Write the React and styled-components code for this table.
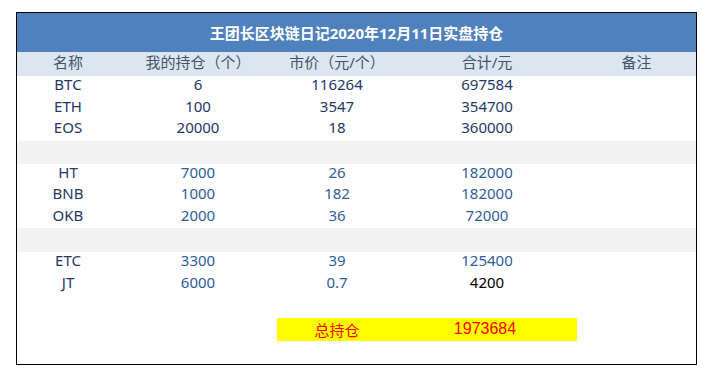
import React from "react";
import styled, { createGlobalStyle } from "styled-components";

const GlobalStyle = createGlobalStyle`
  html, body {
    margin: 0;
    padding: 0;
    background: #ffffff;
  }
  body {
    font-family: "Noto Sans", "Noto Sans CJK SC", sans-serif;
  }
`;

const COLS = "102px 158px 120px 180px 1fr";

export const Page = styled.div`
  padding: 12px 0 0 16px;
`;

export const Sheet = styled.div`
  width: 681px;
  height: 353px;
  box-sizing: border-box;
  border: 1px solid #000000;
  display: flex;
  flex-direction: column;
`;

export const TitleBar = styled.div`
  height: 39px;
  background: #4f81bd;
  color: #ffffff;
  font-weight: 700;
  font-size: 15px;
  display: flex;
  align-items: center;
  justify-content: center;
  padding-bottom: 1px;
  box-sizing: border-box;
`;

export const Row = styled.div`
  display: grid;
  grid-template-columns: ${COLS};
  height: ${(p) => p.$h || 21.5}px;
  background: ${(p) => p.$bg || "transparent"};
  align-items: center;
  font-size: 15px;
  color: ${(p) => p.$color || "#1f3864"};
`;

export const Cell = styled.div`
  text-align: center;
  line-height: 1;
  padding-bottom: ${(p) => (p.$lift ? 4 : 0)}px;
  color: ${(p) => p.$color || "inherit"};
`;

export const TotalBox = styled.div`
  grid-column: 3 / 5;
  display: grid;
  grid-template-columns: 120px 180px;
  align-items: center;
  height: 23px;
  background: #ffff00;
  color: #ff0000;
`;

export const TotalLabel = styled.div`
  text-align: center;
  font-size: 15px;
  padding-bottom: 1px;
`;

export const TotalValue = styled.div`
  text-align: center;
  font-family: "Liberation Sans", sans-serif;
  font-size: 16px;
  padding-right: 4px;
  padding-bottom: 1px;
`;

const groups = [
  {
    color: "#1f3864",
    rows: [
      ["BTC", "6", "116264", "697584"],
      ["ETH", "100", "3547", "354700"],
      ["EOS", "20000", "18", "360000"],
    ],
  },
  {
    color: "#2f5d9c",
    rows: [
      ["HT", "7000", "26", "182000"],
      ["BNB", "1000", "182", "182000"],
      ["OKB", "2000", "36", "72000"],
    ],
  },
  {
    color: "#2f5d9c",
    rows: [
      ["ETC", "3300", "39", "125400"],
      ["JT", "6000", "0.7", "4200", "#000000"],
    ],
  },
];

const DataRow = ({ row, color }) => (
  <Row $color={color}>
    <Cell $lift $color="#1f3864">{row[0]}</Cell>
    <Cell $lift>{row[1]}</Cell>
    <Cell $lift>{row[2]}</Cell>
    <Cell $lift $color={row[4]}>{row[3]}</Cell>
    <Cell $lift />
  </Row>
);

export default function App() {
  return (
    <Page>
      <GlobalStyle />
      <Sheet>
        <TitleBar>王团长区块链日记2020年12月11日实盘持仓</TitleBar>
        <Row $h={24} $bg="#dce6f1" $color="#44546a">
          <Cell $lift>名称</Cell>
          <Cell $lift>我的持仓（个）</Cell>
          <Cell $lift>市价（元/个）</Cell>
          <Cell $lift>合计/元</Cell>
          <Cell $lift>备注</Cell>
        </Row>
        {groups.map((g, gi) => (
          <React.Fragment key={gi}>
            {gi > 0 && <Row $h={gi === 1 ? 23 : 24} $bg="#f2f2f2" />}
            {g.rows.map((r) => (
              <DataRow key={r[0]} row={r} color={g.color} />
            ))}
          </React.Fragment>
        ))}
        <Row $h={23} />
        <Row $h={23}>
          <TotalBox>
            <TotalLabel>总持仓</TotalLabel>
            <TotalValue>1973684</TotalValue>
          </TotalBox>
        </Row>
      </Sheet>
    </Page>
  );
}
